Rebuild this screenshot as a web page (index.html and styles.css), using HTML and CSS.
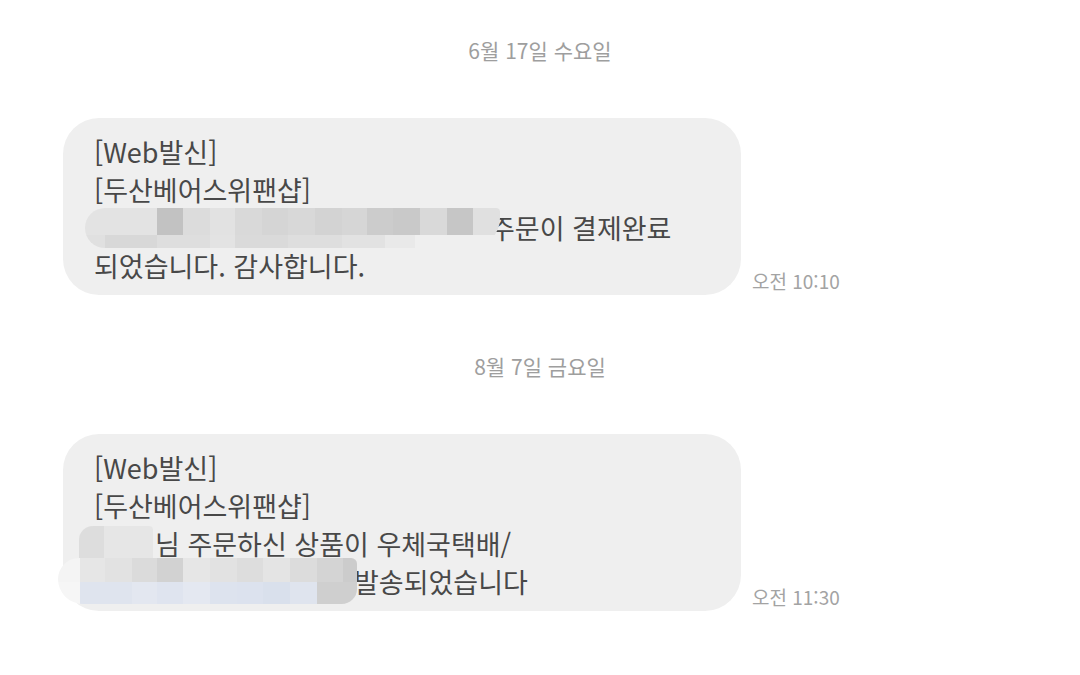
FILE: index.html
```html
<!DOCTYPE html>
<html lang="ko">
<head>
    <meta charset="utf-8">
    <title>메시지</title>
    <link rel="stylesheet" href="styles.css">
</head>
<body>
    <div class="thread">
        <div class="day">
            <div class="date">6월 17일 수요일</div>
            <div class="row">
                <div class="bubble">
                    <div>[Web발신]</div>
                    <div>[두산베어스위팬샵]</div>
                    <div><span class="gap gap-a"></span>주문이 결제완료</div>
                    <div>되었습니다. 감사합니다.</div>
                    <div class="mosaic mosaic-a"></div>
                </div>
                <span class="time">오전 10:10</span>
            </div>
        </div>
        <div class="day">
            <div class="date">8월 7일 금요일</div>
            <div class="row">
                <div class="bubble">
                    <div>[Web발신]</div>
                    <div>[두산베어스위팬샵]</div>
                    <div><span class="gap gap-b"></span>님 주문하신 상품이 우체국택배/</div>
                    <div><span class="gap gap-c"></span>발송되었습니다</div>
                    <div class="mosaic mosaic-b-top"></div>
                    <div class="mosaic mosaic-b-bottom"></div>
                </div>
                <span class="time">오전 11:30</span>
            </div>
        </div>
    </div>
</body>
</html>
```

FILE: styles.css
```css
body {
    margin: 0;
    background: #ffffff;
    font-family: "Noto Sans CJK KR", "Noto Sans", sans-serif;
}
.thread {
    padding-top: 37px;
}
.day + .day {
    margin-top: 58px;
}
.date {
    text-align: center;
    font-size: 21px;
    line-height: 26px;
    color: #9e9e9e;
    margin-bottom: 55px;
}
.row {
    display: flex;
    align-items: flex-end;
    gap: 11px;
    padding-left: 63px;
}
.bubble {
    position: relative;
    width: 678px;
    box-sizing: border-box;
    padding: 15px 30px 10px 31px;
    background: #efefef;
    border-radius: 36px;
    font-size: 27px;
    line-height: 38px;
    color: #484848;
}
.gap {
    display: inline-block;
}
.gap-a {
    width: 396px;
}
.gap-b {
    width: 61px;
}
.gap-c {
    width: 260px;
}
.time {
    font-size: 19px;
    line-height: 20px;
    color: #a3a3a3;
    margin-bottom: 4px;
}
.mosaic {
    position: absolute;
    filter: blur(0.7px);
}
.mosaic-a {
    left: 22px;
    top: 90px;
    width: 415px;
    height: 40px;
    border-radius: 20px 4px 30px 20px;
    background:
        linear-gradient(to right,
            #e3e3e3 0 72px, #c2c2c2 72px 98px, #dcdcdc 98px 125px,
            #e2e2e2 125px 150px, #d9d9d9 150px 177px, #d5d5d5 177px 203px,
            #d8d8d8 203px 230px, #d3d3d3 230px 257px, #d6d6d6 257px 282px,
            #cccccc 282px 308px, #c9c9c9 308px 335px, #d9d9d9 335px 362px,
            #c6c6c6 362px 388px, #e0e0e0 388px 415px) left top / 415px 27px no-repeat,
        linear-gradient(to right,
            #e0e0e0 0 20px, #d8d8d8 20px 72px, #dedede 72px 125px,
            #e3e3e3 125px 150px, #dadada 150px 203px, #dedede 203px 257px,
            #e2e2e2 257px 300px, #e9e9e9 300px 330px, rgba(239, 239, 239, 0) 330px) left bottom / 415px 13px no-repeat;
}
.mosaic-b-top {
    left: 16px;
    top: 92px;
    width: 74px;
    height: 33px;
    border-radius: 14px 4px 0 0;
    background: linear-gradient(to right, #dddddd 0 25px, #e6e6e6 25px 74px);
}
.mosaic-b-bottom {
    left: -5px;
    top: 124px;
    width: 299px;
    height: 46px;
    border-radius: 22px 6px 16px 26px;
    background:
        linear-gradient(to right,
            #f4f4f4 0 22px, #e6e6e6 22px 47px, #e2e2e2 47px 74px,
            #dbdbdb 74px 99px, #d2d2d2 99px 125px, #e6e6e6 125px 152px,
            #e2e2e2 152px 179px, #dddddd 179px 205px, #e4e4e4 205px 232px,
            #dcdcdc 232px 259px, #d4d4d4 259px 285px, #cccccc 285px 299px) left top / 299px 24px no-repeat,
        linear-gradient(to right,
            #f6f6f6 0 22px, #dfe4ee 22px 74px, #e3e7f0 74px 99px,
            #dfe4ef 99px 125px, #e4e8f1 125px 152px, #dde3ee 152px 179px,
            #dce2ee 179px 205px, #d9e0ec 205px 232px, #dfe4ee 232px 259px,
            #cfcfcf 259px 299px) left bottom / 299px 22px no-repeat;
}
```
